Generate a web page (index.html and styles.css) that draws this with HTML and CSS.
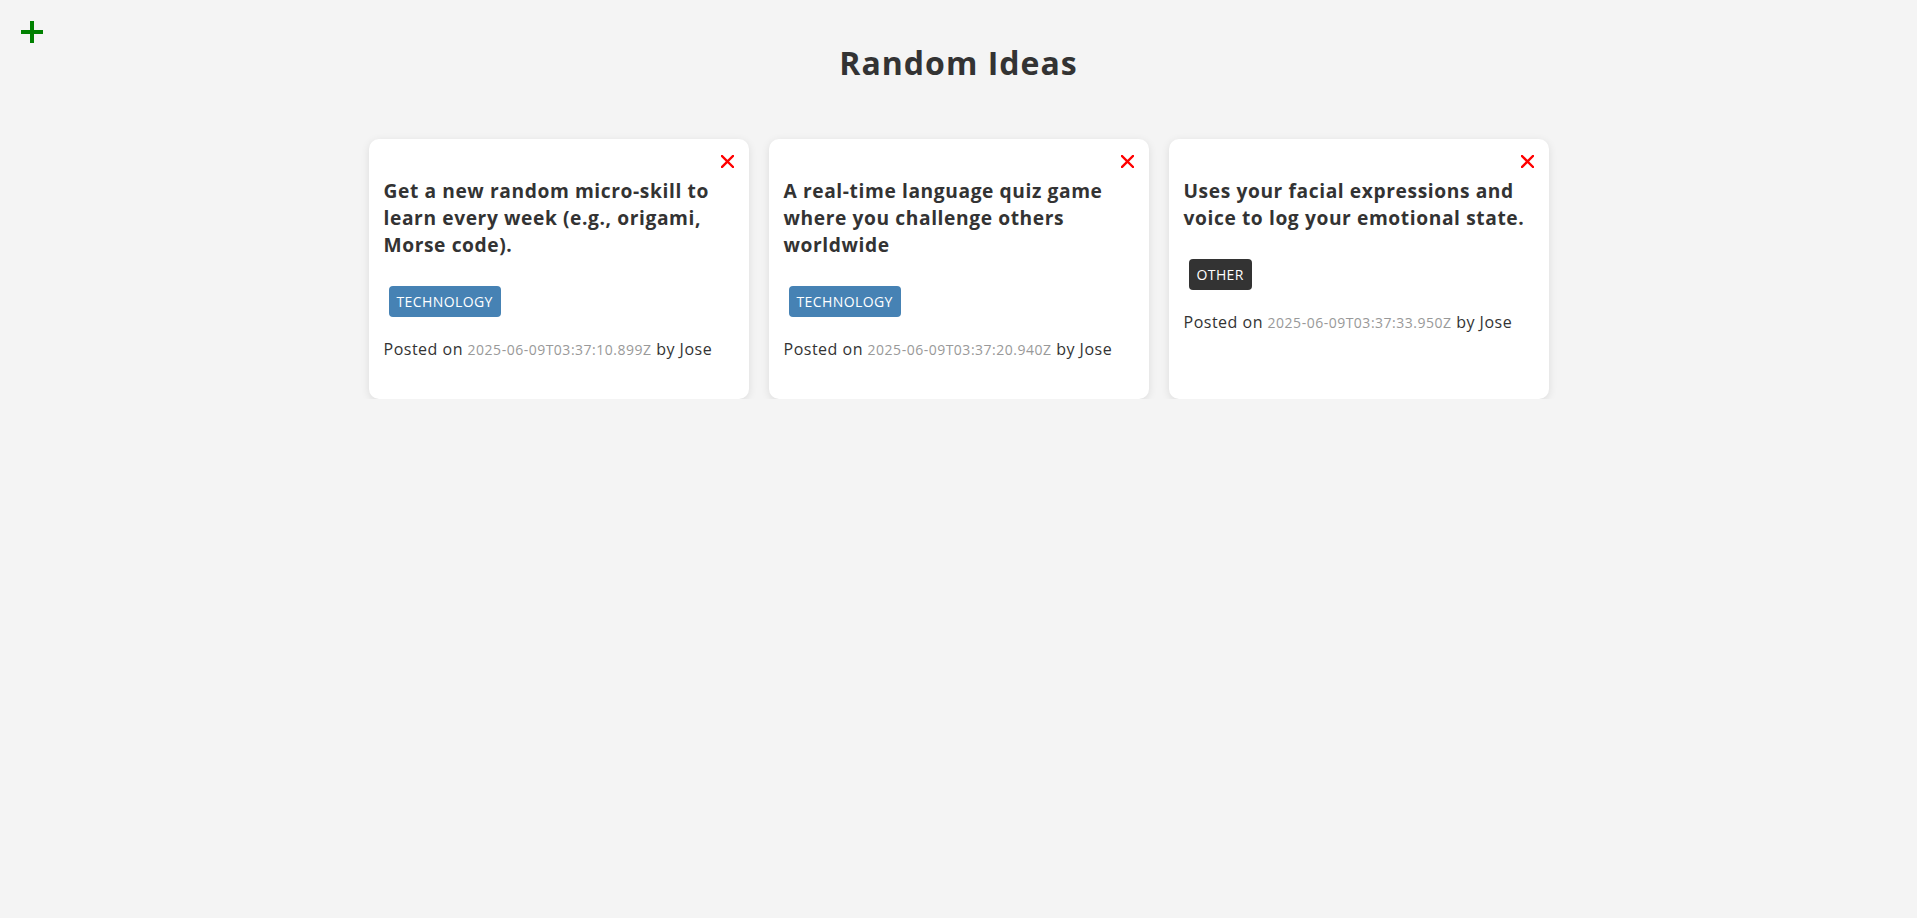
FILE: index.html
```html
<!DOCTYPE html>
<html lang="en">
<head>
<meta charset="UTF-8">
<title>Random Ideas</title>
<link rel="stylesheet" href="styles.css">
</head>
<body>
<header class="header">
  <button class="add-btn" aria-label="Add idea">
    <svg width="22" height="22" viewBox="0 0 22 22"><rect x="9" y="0" width="4" height="22" fill="#008000"/><rect x="0" y="9" width="22" height="4" fill="#008000"/></svg>
  </button>
  <h1 class="title">Random Ideas</h1>
  <div></div>
</header>
<main class="cards">
  <div class="card">
    <div class="card-top"><button class="delete" aria-label="Delete"><svg width="13" height="13" viewBox="0 0 13 13"><path d="M1 1L12 12M12 1L1 12" stroke="#ff0000" stroke-width="2.4" stroke-linecap="square"/></svg></button></div>
    <h3 class="idea">Get a new random micro-skill to learn every week (e.g., origami, Morse code).</h3>
    <p><span class="tag tag-tech">TECHNOLOGY</span></p>
    <p class="meta">Posted on <span class="date">2025-06-09T03:37:10.899Z</span> by Jose</p>
  </div>
  <div class="card">
    <div class="card-top"><button class="delete" aria-label="Delete"><svg width="13" height="13" viewBox="0 0 13 13"><path d="M1 1L12 12M12 1L1 12" stroke="#ff0000" stroke-width="2.4" stroke-linecap="square"/></svg></button></div>
    <h3 class="idea">A real-time language quiz game where you challenge others worldwide</h3>
    <p><span class="tag tag-tech">TECHNOLOGY</span></p>
    <p class="meta">Posted on <span class="date">2025-06-09T03:37:20.940Z</span> by Jose</p>
  </div>
  <div class="card">
    <div class="card-top"><button class="delete" aria-label="Delete"><svg width="13" height="13" viewBox="0 0 13 13"><path d="M1 1L12 12M12 1L1 12" stroke="#ff0000" stroke-width="2.4" stroke-linecap="square"/></svg></button></div>
    <h3 class="idea">Uses your facial expressions and voice to log your emotional state.</h3>
    <p><span class="tag tag-other">OTHER</span></p>
    <p class="meta">Posted on <span class="date">2025-06-09T03:37:33.950Z</span> by Jose</p>
  </div>
</main>
</body>
</html>
```

FILE: styles.css
```css
* { box-sizing: border-box; }

body {
  margin: 0;
  background: #f4f4f4;
  color: #333;
  font-family: "Open Sans", "Noto Sans", sans-serif;
}

.header {
  display: grid;
  grid-template-columns: 1fr auto 1fr;
  align-items: start;
}

.add-btn {
  justify-self: start;
  margin: 21px;
  padding: 0;
  border: 0;
  background: none;
  width: 22px;
  height: 22px;
  display: block;
  cursor: pointer;
}
.add-btn svg { display: block; }

.title {
  margin: 41px 0 0;
  font-size: 32px;
  font-weight: 700;
  line-height: 44px;
  letter-spacing: 1px;
  text-align: center;
}

.cards {
  margin: 54px auto 0;
  width: 1180px;
  display: grid;
  grid-template-columns: repeat(3, 380px);
  gap: 20px;
}

.card {
  background: #fff;
  border-radius: 10px;
  box-shadow: 0 2px 8px rgba(0, 0, 0, 0.1);
  padding: 15px 15px 37px;
}

.card-top {
  display: flex;
  justify-content: flex-end;
  height: 23px;
}

.delete {
  margin-top: 1px;
  padding: 0;
  border: 0;
  background: none;
  width: 13px;
  height: 13px;
  cursor: pointer;
}
.delete svg { display: block; }

.idea {
  margin: 0;
  font-size: 19.2px;
  font-weight: 700;
  line-height: 27px;
  letter-spacing: 0.6px;
}

.card p { margin: 0; }

.card p:has(.tag) {
  margin-top: 28px;
  margin-left: 5px;
  display: flex;
}

.tag {
  display: inline-block;
  color: #fff;
  font-size: 14px;
  line-height: 21px;
  letter-spacing: 0.4px;
  padding: 5px 8px;
  border-radius: 4px;
}
.tag-tech { background: #4682b4; }
.tag-other { background: #333; }

.card p.meta {
  margin-top: 20px;
  font-size: 16px;
  line-height: 24px;
  letter-spacing: 0.5px;
}

.date {
  color: #999;
  font-size: 14px;
  letter-spacing: 0.5px;
}
```
